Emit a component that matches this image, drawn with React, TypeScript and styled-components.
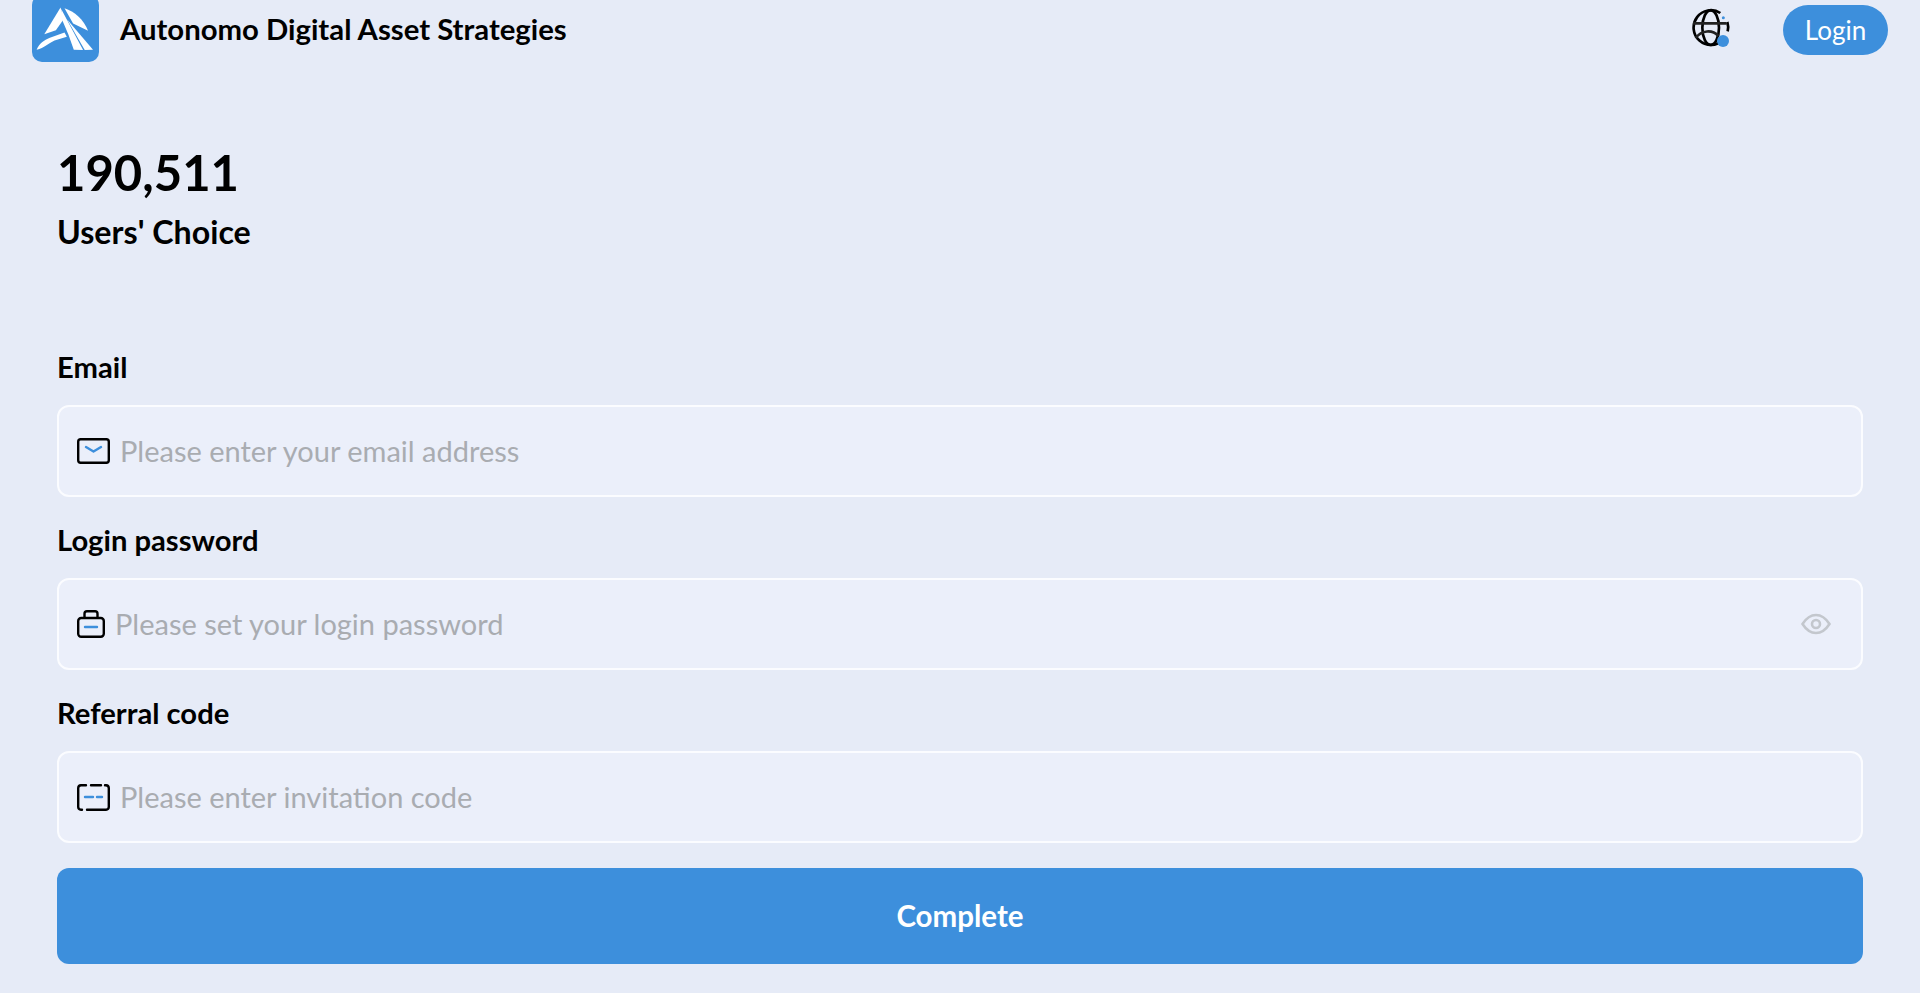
import React from "react";
import styled, { createGlobalStyle } from "styled-components";

const GlobalStyle = createGlobalStyle`
  html, body {
    margin: 0;
    padding: 0;
    background: #e6ebf7;
    font-family: "Lato", "Liberation Sans", sans-serif;
    overflow: hidden;
  }
  * {
    box-sizing: border-box;
  }
`;

const Page = styled.div`
  height: 993px;
  color: #000;
`;

const Header = styled.header`
  display: flex;
  align-items: center;
  height: 67px;
  margin-top: -5px;
  padding: 0 32px;
`;

const Logo = styled.svg`
  width: 67px;
  height: 67px;
  flex: none;
`;

const Title = styled.div`
  margin-left: 21px;
  font-size: 29.3px;
  font-weight: 700;
  flex: 1;
`;

const Globe = styled.svg`
  width: 40px;
  height: 40px;
  margin-right: 52px;
  margin-top: -1px;
`;

const LoginButton = styled.button`
  width: 105px;
  height: 50px;
  margin-top: 3px;
  border: 0;
  border-radius: 25px;
  background: #3d8fdc;
  color: #fff;
  font-family: inherit;
  font-size: 26px;
`;

const Main = styled.main`
  padding: 79px 57px 0;
`;

const Count = styled.div`
  font-size: 49px;
  font-weight: 700;
  line-height: 62px;
`;

const Subtitle = styled.div`
  margin-top: 10px;
  font-size: 32.2px;
  font-weight: 700;
  line-height: 38px;
`;

const Form = styled.form`
  margin-top: 99px;
  display: flex;
  flex-direction: column;
`;

const Label = styled.label`
  display: block;
  font-size: 29.2px;
  font-weight: 700;
  line-height: 34px;
  margin-bottom: 21px;
`;

const Field = styled.div`
  margin-bottom: 26px;
`;

const InputBox = styled.div`
  display: flex;
  align-items: center;
  height: 92px;
  padding: 0 30px 0 18px;
  border: 2px solid #fbfcff;
  border-radius: 12px;
  background: #ebeffa;
`;

const Input = styled.input`
  flex: 1;
  min-width: 0;
  margin: 0 0 2px 8px;
  border: 0;
  outline: 0;
  background: transparent;
  font-family: inherit;
  font-size: 29px;
  color: #000;
  &::placeholder {
    color: #a9acb1;
    opacity: 1;
  }
`;

const Submit = styled.button`
  height: 96px;
  margin-top: -1px;
  padding-bottom: 2px;
  border: 0;
  border-radius: 12px;
  background: #3d8fdc;
  color: #fff;
  font-family: inherit;
  font-size: 29.5px;
  font-weight: 700;
`;

function LogoIcon() {
  return (
    <Logo viewBox="36 -16 202 202">
      <rect x="36" y="-16" width="202" height="202" rx="30" fill="#3d8fdc" />
      <g fill="#fff">
        <path d="M122 22 L73 102 L108 90 L132 56 Z" />
        <path d="M50 149 C58 130 72 120 90 113 L134 97 L141 110 L104 121 C84 130 74 143 50 149 Z" />
        <path d="M124 26 L190 150 L162 149 L146 104 L128 62 Z" />
        <path d="M142 58 L220 149 L195 150 Z" />
        <path d="M134 24 C164 34 192 58 205 92 L160 70 Z" />
      </g>
    </Logo>
  );
}

function GlobeIcon() {
  return (
    <Globe viewBox="36 26 120 120">
      <g fill="none" stroke="#000" strokeWidth="8">
        <path d="M124 41 A52 52 0 1 0 132 122" />
        <ellipse cx="95" cy="85" rx="25" ry="52" />
        <path d="M42 72 H142" stroke="#222" />
        <path d="M145 68 A52 52 0 0 1 146 96" />
        <path d="M50 116 C68 92 100 90 118 110" stroke="#222" />
      </g>
      <circle cx="133" cy="55" r="4.5" fill="#3d8fdc" />
      <circle cx="132" cy="125" r="18" fill="#3d8fdc" />
    </Globe>
  );
}

function MailIcon() {
  return (
    <svg width="33" height="26" viewBox="0 0 33 26" fill="none">
      <rect x="1.2" y="1.2" width="30.6" height="23.6" rx="2.5" stroke="#000" strokeWidth="2.4" />
      <path d="M9 9 L16.5 13.5 L24 9" stroke="#3d8fdc" strokeWidth="2.4" strokeLinecap="round" strokeLinejoin="round" />
    </svg>
  );
}

function LockIcon() {
  return (
    <svg width="28" height="28" viewBox="0 0 28 28" fill="none">
      <rect x="1.2" y="8" width="25.6" height="18.8" rx="3" stroke="#000" strokeWidth="2.4" />
      <path d="M7.5 8 V3.7 A2.5 2.5 0 0 1 10 1.2 H18 A2.5 2.5 0 0 1 20.5 3.7 V8" stroke="#000" strokeWidth="2.4" />
      <path d="M8 17 H20" stroke="#3d8fdc" strokeWidth="2.4" strokeLinecap="round" />
    </svg>
  );
}

function CodeIcon() {
  return (
    <svg width="33" height="27" viewBox="0 0 33 27" fill="none">
      <path d="M9 1.2 H4 A3 3 0 0 0 1.2 4 V23 A3 3 0 0 0 4 25.8 H5 M10 25.8 H29 A3 3 0 0 0 31.8 23 V4 A3 3 0 0 0 29 1.2 H28 M24 1.2 H14" stroke="#000" strokeWidth="2.4" strokeLinecap="round" />
      <path d="M8 13 H16 M20 13 H25" stroke="#3d8fdc" strokeWidth="2.4" strokeLinecap="round" />
    </svg>
  );
}

function EyeIcon() {
  return (
    <svg width="30" height="22" viewBox="0 0 30 22" fill="none">
      <path d="M1.5 11 C6 4 10 2 15 2 C20 2 24 4 28.5 11 C24 18 20 20 15 20 C10 20 6 18 1.5 11 Z" stroke="#c3c7cd" strokeWidth="2.6" />
      <circle cx="15" cy="11" r="4" stroke="#c3c7cd" strokeWidth="2.6" />
    </svg>
  );
}

export default function App() {
  return (
    <Page>
      <GlobalStyle />
      <Header>
        <LogoIcon />
        <Title>Autonomo Digital Asset Strategies</Title>
        <GlobeIcon />
        <LoginButton type="button">Login</LoginButton>
      </Header>
      <Main>
        <Count>190,511</Count>
        <Subtitle>Users' Choice</Subtitle>
        <Form onSubmit={(e) => e.preventDefault()}>
          <Field>
            <Label>Email</Label>
            <InputBox>
              <MailIcon />
              <Input placeholder="Please enter your email address" />
            </InputBox>
          </Field>
          <Field>
            <Label>Login password</Label>
            <InputBox>
              <LockIcon />
              <Input type="password" placeholder="Please set your login password" />
              <EyeIcon />
            </InputBox>
          </Field>
          <Field>
            <Label>Referral code</Label>
            <InputBox>
              <CodeIcon />
              <Input placeholder="Please enter invitation code" />
            </InputBox>
          </Field>
          <Submit type="submit">Complete</Submit>
        </Form>
      </Main>
    </Page>
  );
}
